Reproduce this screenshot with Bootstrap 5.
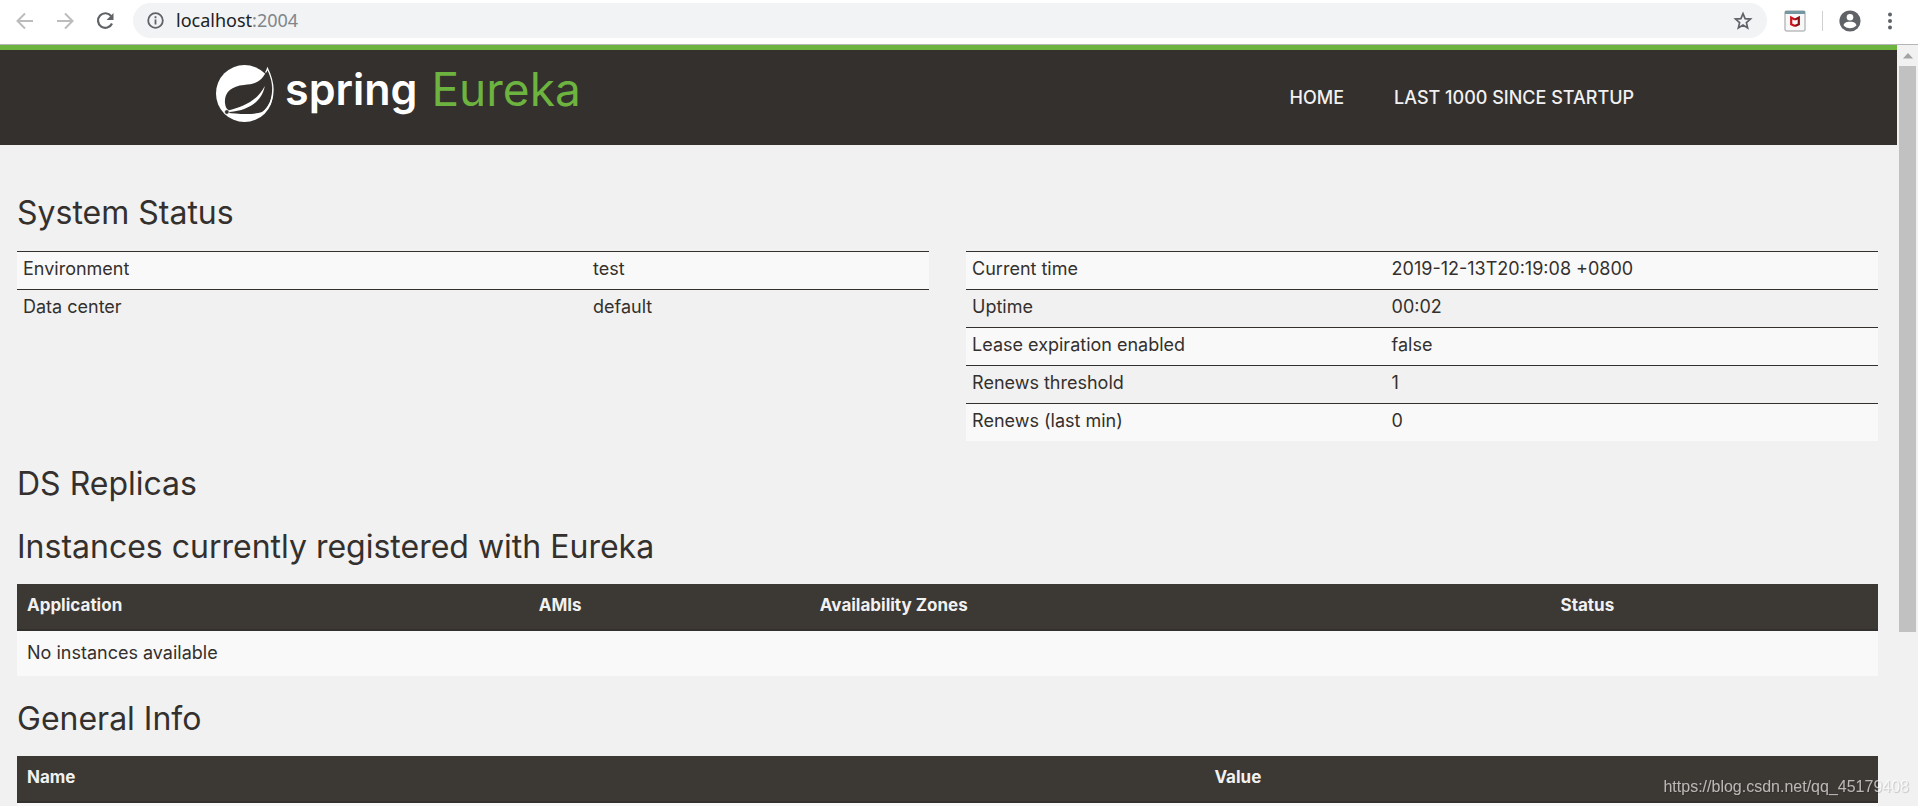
<!doctype html>
<html lang="en">
<head>
<meta charset="utf-8">
<meta name="viewport" content="width=device-width, initial-scale=1">
<title>Eureka</title>
<link rel="stylesheet" href="https://cdn.jsdelivr.net/npm/bootstrap@5.3.0/dist/css/bootstrap.min.css">
<style>
  body { font-family: Inter, "Noto Sans", sans-serif; font-size: 18px; line-height: 25px; color: #34302d; background: #f1f1f1; }

  /* browser toolbar */
  .browser-bar { background: #fff; border-bottom: 1px solid #b6b4b6; padding: 3px 8px 6px 5px; }
  .tool-btn { width: 40px; height: 35px; padding: 0; border: 0; background: none; color: #5f6368; display: flex; align-items: center; justify-content: center; }
  .tool-btn:disabled { color: #babcbe; opacity: 1; }
  .address { height: 35px; background: #f1f3f4; border-radius: 18px; padding-left: 14px; gap: 12px; }
  .address-text { font: 18px/35px "Noto Sans", sans-serif; color: #80868b; }
  .address-text b { font-weight: 400; color: #202124; }
  .bar-divider { width: 1px; height: 20px; margin: 0 7px; background: #cdcfd1; }

  /* site header */
  .viewport-area { min-height: 0; }
  .page-pane { min-width: 0; overflow: hidden; }
  .top-nav { background: #34302d; border-top: 5px solid #6db33f; min-height: 100px; padding: 0; }
  .nav-inner { max-width: 1465px; }
  .logo-spring { font-size: 43px; font-weight: 600; line-height: 49px; color: #fff; margin-right: 14px; }
  .logo-eureka { font-size: 46px; line-height: 49px; color: #6db33f; }
  .top-nav .navbar-nav { padding-right: 22px; }
  .top-nav .navbar-nav .nav-link { font-weight: 500; color: #f1f1f1; padding: 8px 25px; }

  /* page body */
  .eureka-main { padding: 49px 19px 0 17px; }
  h1 { font-size: 32px; font-weight: 400; line-height: 37px; margin: 24px 0 0; }
  h1:first-child { margin-top: 0; }
  h1 + h1 { margin-top: 26px; }
  .table { --bs-table-bg: transparent; color: #34302d; margin: 0; table-layout: fixed; }
  .status-row { --bs-gutter-x: 37px; margin-top: 20px; }
  .status-table td { border: 0; border-top: 1px solid #34302d; padding: 4px 6px 8px; color: #34302d; }
  .table-striped > tbody > tr:nth-of-type(odd) > * { --bs-table-accent-bg: #f9f9f9; --bs-table-bg-type: #f9f9f9; color: #34302d; }
  .list-table { margin-top: 19px; }
  .list-table th { background: #3c3834; color: #f1f1f1; font-size: 17px; font-weight: 700; border: 0; border-bottom: 2px solid #34302d; padding: 9px 10px 11px; }
  .list-table td { border: 0; padding: 9px 10px 11px; height: 45px; }
  .c-env { width: 62.5%; }
  .c-time { width: 46%; }
  .c-app { width: 27.5%; }
  .c-ami { width: 15.1%; }
  .c-zone { width: 39.8%; }
  .c-name { width: 63.8%; }

  .scroll-rail { width: 21px; background: #f1f1f1; padding: 0 2px; }
  .scroll-up { height: 21px; display: flex; align-items: center; justify-content: center; }
  .scroll-thumb { height: 74.4%; background: #c1c1c1; }
  .watermark { position: fixed; right: 9px; bottom: 7px; font: 16px/24px "Liberation Sans", sans-serif; color: rgba(255,255,255,.65); text-shadow: 1px 1px 1px rgba(0,0,0,.18); }
</style>
</head>
<body class="vh-100 overflow-hidden d-flex flex-column">

<header class="browser-bar d-flex align-items-center">
  <button class="tool-btn" disabled aria-label="Back"><svg width="20" height="20" viewBox="0 0 20 20" fill="none" stroke="currentColor" stroke-width="2"><path d="M18 10H3M10 2.500 2.500 10l7.500 7.500"/></svg></button>
  <button class="tool-btn" disabled aria-label="Forward"><svg width="20" height="20" viewBox="0 0 20 20" fill="none" stroke="currentColor" stroke-width="2"><path d="M2 10h15M10 2.500 17.500 10 10 17.500"/></svg></button>
  <button class="tool-btn" aria-label="Reload"><svg width="20" height="20" viewBox="0 0 20 20" fill="none" stroke="currentColor" stroke-width="2.200"><path d="M16.200 5.200A7.300 7.300 0 1 0 17 12.500"/><path d="M18.500 2v7h-7z" fill="currentColor" stroke="none"/></svg></button>
  <div class="address flex-grow-1 d-flex align-items-center mx-2">
    <svg class="flex-shrink-0" width="17" height="17" viewBox="0 0 17 17" fill="none" stroke="#5f6368" stroke-width="1.800"><circle cx="8.500" cy="8.500" r="7.300"/><path d="M8.500 7.500v5M8.500 4.200v2"/></svg>
    <div class="address-text flex-grow-1"><b>localhost</b>:2004</div>
    <button class="tool-btn me-1" aria-label="Bookmark this page"><svg width="20" height="20" viewBox="0 0 20 20" fill="none" stroke="currentColor" stroke-width="1.700"><path d="m10 2.600 2.100 5 5.400.45-4.100 3.550 1.250 5.300L10 14.100l-4.650 2.800 1.250-5.300L2.500 8.050l5.400-.45z"/></svg></button>
  </div>
  <button class="tool-btn" aria-label="Extension"><svg width="22" height="22" viewBox="0 0 22 22"><rect x="1" y="1" width="20" height="20" rx="2" fill="#f8f8f8" stroke="#b9bcbe" stroke-width="1.500"/><path d="M1 1h20v3H1z" fill="#7397a1"/><path d="M11 16 7.200 14.300V7.500L11 9.600" fill="none" stroke="#d01018" stroke-width="2.200"/><path d="M11 16l3.800-1.700V7.500L11 9.600" fill="none" stroke="#8a0d14" stroke-width="2.200"/></svg></button>
  <span class="bar-divider"></span>
  <button class="tool-btn" aria-label="Profile"><svg width="22" height="22" viewBox="0 0 22 22"><circle cx="11" cy="11" r="10.600" fill="#5f6368"/><circle cx="11" cy="7.300" r="3.300" fill="#fff"/><path d="M4.500 15.200c1-3 4.200-3.400 6.500-3.400s5.500.4 6.500 3.400c-1.500 2-4 3-6.500 3s-5-1-6.500-3z" fill="#fff"/></svg></button>
  <button class="tool-btn" aria-label="Menu"><svg width="6" height="18" viewBox="0 0 6 18" fill="currentColor"><circle cx="3" cy="2.500" r="2"/><circle cx="3" cy="9" r="2"/><circle cx="3" cy="15.500" r="2"/></svg></button>
</header>

<div class="viewport-area d-flex flex-grow-1">
  <div class="page-pane flex-grow-1">
    <nav class="navbar navbar-expand top-nav">
      <div class="nav-inner container-fluid p-0 align-items-center">
        <a class="navbar-brand d-flex align-items-start p-0 pb-2 m-0" href="#">
          <svg class="me-2" width="61" height="57" viewBox="0 0 61 57">
            <circle cx="28.500" cy="28.500" r="28.500" fill="#fff"/>
            <path d="M51.500 3.500C46 18 38 19 28 20 15 21 8 28 9 38c.3 3 1 5 3 7l-1 2.500c10 1.800 27 2.500 35-.5C60 37 57 15 51.500 3.500z" fill="#34302d"/>
            <path d="M49.500 7.500C50.500 6.500 51 5 51.500 3.500 57 15 62 34 47.500 47.500" fill="none" stroke="#fff" stroke-width="1.300"/>
            <path d="M12 45.500C28 42 42 35 48.800 21 46.500 35 34 45.500 13.500 47z" fill="#fff"/>
            <circle cx="10.800" cy="47" r="2.300" fill="#34302d" stroke="#fff" stroke-width=".7"/>
          </svg>
          <span class="logo-spring">spring</span><span class="logo-eureka">Eureka</span>
        </a>
        <ul class="navbar-nav">
          <li class="nav-item"><a class="nav-link" href="#">HOME</a></li>
          <li class="nav-item"><a class="nav-link" href="#">LAST 1000 SINCE STARTUP</a></li>
        </ul>
      </div>
    </nav>

    <main class="eureka-main">
      <h1>System Status</h1>
      <div class="row status-row">
        <div class="col-6">
          <table class="table table-striped status-table">
            <colgroup><col class="c-env"><col></colgroup>
            <tbody>
              <tr><td>Environment</td><td>test</td></tr>
              <tr><td>Data center</td><td>default</td></tr>
            </tbody>
          </table>
        </div>
        <div class="col-6">
          <table class="table table-striped status-table">
            <colgroup><col class="c-time"><col></colgroup>
            <tbody>
              <tr><td>Current time</td><td>2019-12-13T20:19:08 +0800</td></tr>
              <tr><td>Uptime</td><td>00:02</td></tr>
              <tr><td>Lease expiration enabled</td><td>false</td></tr>
              <tr><td>Renews threshold</td><td>1</td></tr>
              <tr><td>Renews (last min)</td><td>0</td></tr>
            </tbody>
          </table>
        </div>
      </div>

      <h1>DS Replicas</h1>
      <h1>Instances currently registered with Eureka</h1>
      <table class="table table-striped list-table">
        <colgroup><col class="c-app"><col class="c-ami"><col class="c-zone"><col></colgroup>
        <thead><tr><th>Application</th><th>AMIs</th><th>Availability Zones</th><th>Status</th></tr></thead>
        <tbody><tr><td colspan="4">No instances available</td></tr></tbody>
      </table>

      <h1>General Info</h1>
      <table class="table table-striped list-table">
        <colgroup><col class="c-name"><col></colgroup>
        <thead><tr><th>Name</th><th>Value</th></tr></thead>
        <tbody><tr><td></td><td></td></tr></tbody>
      </table>
    </main>
  </div>
  <div class="scroll-rail flex-shrink-0">
    <div class="scroll-up"><svg width="10" height="6" viewBox="0 0 10 6"><path d="M0 5.500 5 0l5 5.500z" fill="#a3a3a3"/></svg></div>
    <div class="scroll-thumb"></div>
  </div>
</div>
<div class="watermark">https://blog.csdn.net/qq_45179408</div>

<script src="https://cdn.jsdelivr.net/npm/bootstrap@5.3.0/dist/js/bootstrap.bundle.min.js"></script>
</body>
</html>
